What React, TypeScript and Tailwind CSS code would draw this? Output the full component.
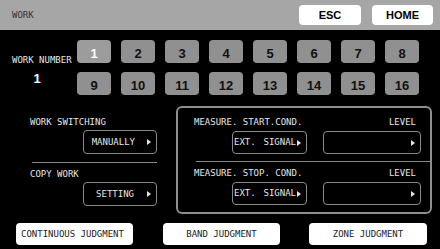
const mono = { fontFamily: '"DejaVu Sans Mono", "Liberation Mono", monospace' };
const sans = { fontFamily: '"Liberation Sans", Arial, sans-serif' };

function Arrow() {
  return (
    <svg width="4" height="6" viewBox="0 0 4 6" className="shrink-0">
      <path d="M0 0L4 3L0 6Z" fill="#e6e6e6" />
    </svg>
  );
}

function SelectBox({ label, className }: { label?: React.ReactNode; className: string }) {
  return (
    <div
      className={`flex items-center justify-end rounded-[4px] border border-[#8a8a8a] pr-[5px] text-[9px] leading-none text-[#e6e6e6] ${className}`}
    >
      {label}
      <Arrow />
    </div>
  );
}

function NumberKey({ n, active }: { n: number; active?: boolean }) {
  return (
    <button
      type="button"
      style={sans}
      className={`flex h-[23px] w-[34px] items-center justify-center rounded-[4px] pt-[3px] text-[13px] font-bold leading-none ${
        active ? "bg-[#9c9c9c] text-white" : "bg-[#909090] text-[#111]"
      }`}
    >
      {n}
    </button>
  );
}

function JudgeButton({ label, className }: { label: string; className: string }) {
  return (
    <button
      type="button"
      className={`flex h-[22px] items-center rounded-[4px] bg-white text-[9px] leading-none text-[#222] ${className}`}
    >
      {label}
    </button>
  );
}

function SignalLabel() {
  return (
    <span className="mr-[1px] flex w-[62px] justify-between">
      <span>EXT.</span>
      <span>SIGNAL</span>
    </span>
  );
}

export default function App() {
  const keys = Array.from({ length: 16 }, (_, i) => i + 1);

  return (
    <div style={mono} className="h-[249px] w-[440px] overflow-hidden bg-black">
      {/* header */}
      <div className="flex h-[30px] items-center bg-[#a6a6a6] pl-[12px] pr-[7px]">
        <span className="text-[9px] leading-none text-[#333]">WORK</span>
        <div style={sans} className="ml-auto flex gap-[11px]">
          <button
            type="button"
            className="h-[20px] w-[62px] rounded-[4px] bg-white text-[11px] font-bold text-black"
          >
            ESC
          </button>
          <button
            type="button"
            className="h-[20px] w-[61px] rounded-[4px] bg-white text-[11px] font-bold text-black"
          >
            HOME
          </button>
        </div>
      </div>

      {/* work number */}
      <div className="mt-[10px] flex">
        <div className="w-[77px] pt-[14px]">
          <div className="flex h-[12px] items-center pl-[12px] text-[9px] leading-none text-[#e6e6e6]">
            WORK NUMBER
          </div>
          <div
            style={sans}
            className="ml-[12px] mt-[5px] flex h-[14px] w-[50px] items-center justify-center text-[13px] font-bold leading-none text-white"
          >
            1
          </div>
        </div>
        <div className="grid grid-cols-[repeat(8,34px)] gap-x-[10px] gap-y-[9px]">
          {keys.map((n) => (
            <NumberKey key={n} n={n} active={n === 1} />
          ))}
        </div>
      </div>

      {/* settings */}
      <div className="mt-[11px] flex items-start">
        <div className="ml-[30px] w-[127px] pt-[10px] text-[9px] leading-none text-[#e6e6e6]">
          <div className="flex h-[12px] items-center">WORK SWITCHING</div>
          <SelectBox
            className="ml-[53px] mt-[2px] h-[24px] w-[74px]"
            label={<span className="mr-[12px]">MANUALLY</span>}
          />
          <div className="ml-[2px] mt-[8px] h-px w-[125px] bg-[#8a8a8a]" />
          <div className="mt-[5px] flex h-[12px] items-center">COPY WORK</div>
          <SelectBox
            className="ml-[53px] mt-[2px] h-[24px] w-[74px]"
            label={<span className="mr-[13px]">SETTING</span>}
          />
        </div>

        <div className="ml-[19px] h-[108px] w-[256px] rounded-[6px] border-2 border-[#8e8e8e] pt-[8px] text-[9px] leading-none text-[#e6e6e6]">
          <div className="flex h-[12px] items-center pl-[16px] pr-[14px]">
            <span>MEASURE. START.COND.</span>
            <span className="ml-auto">LEVEL</span>
          </div>
          <div className="mt-[3px] flex gap-[16px] pl-[54px]">
            <SelectBox className="h-[23px] w-[75px]" label={<SignalLabel />} />
            <SelectBox className="h-[23px] w-[98px]" />
          </div>
          <div className="ml-[18px] mt-[7px] h-px bg-[#8a8a8a]" />
          <div className="mt-[5px] flex h-[12px] items-center pl-[16px] pr-[14px]">
            <span>MEASURE. STOP. COND.</span>
            <span className="ml-auto">LEVEL</span>
          </div>
          <div className="mt-[3px] flex gap-[16px] pl-[54px]">
            <SelectBox className="h-[23px] w-[75px]" label={<SignalLabel />} />
            <SelectBox className="h-[23px] w-[98px]" />
          </div>
        </div>
      </div>

      {/* judgment buttons */}
      <div className="ml-[16px] mt-[9px] flex">
        <JudgeButton label="CONTINUOUS JUDGMENT" className="w-[117px] justify-start pl-[5px]" />
        <JudgeButton label="BAND JUDGMENT" className="ml-[30px] w-[117px] justify-center" />
        <JudgeButton label="ZONE JUDGMENT" className="ml-[29px] w-[118px] justify-center" />
      </div>
    </div>
  );
}
